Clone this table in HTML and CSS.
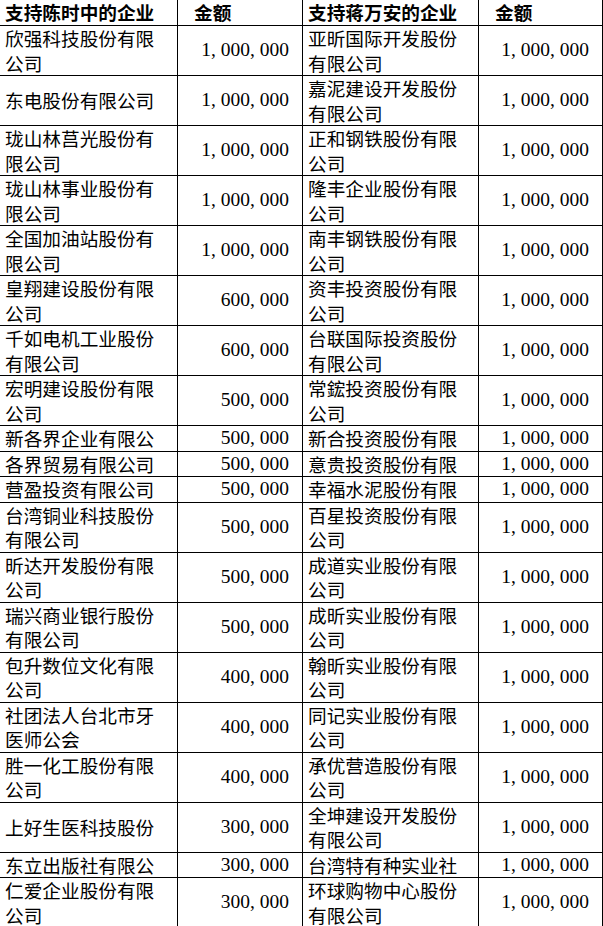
FILE: index.html
```html
<!DOCTYPE html>
<html lang="zh-CN">
<head>
<meta charset="utf-8">
<title>企业捐款</title>
<link rel="stylesheet" href="styles.css">
</head>
<body>
<table class="grid">
  <colgroup>
    <col class="col-name-a">
    <col class="col-amt-a">
    <col class="col-name-b">
    <col class="col-amt-b">
  </colgroup>
  <thead>
    <tr class="head">
      <th class="name">支持陈时中的企业</th>
      <th class="amt-h">金额</th>
      <th class="name">支持蒋万安的企业</th>
      <th class="amt-h">金额</th>
    </tr>
  </thead>
  <tbody>
    <tr class="two"><td class="name">欣强科技股份有限公司</td><td class="amt">1<span class="sep">,</span>000<span class="sep">,</span>000</td><td class="name">亚昕国际开发股份有限公司</td><td class="amt">1<span class="sep">,</span>000<span class="sep">,</span>000</td></tr>
    <tr class="two"><td class="name">东电股份有限公司</td><td class="amt">1<span class="sep">,</span>000<span class="sep">,</span>000</td><td class="name">嘉泥建设开发股份有限公司</td><td class="amt">1<span class="sep">,</span>000<span class="sep">,</span>000</td></tr>
    <tr class="two"><td class="name">珑山林莒光股份有限公司</td><td class="amt">1<span class="sep">,</span>000<span class="sep">,</span>000</td><td class="name">正和钢铁股份有限公司</td><td class="amt">1<span class="sep">,</span>000<span class="sep">,</span>000</td></tr>
    <tr class="two"><td class="name">珑山林事业股份有限公司</td><td class="amt">1<span class="sep">,</span>000<span class="sep">,</span>000</td><td class="name">隆丰企业股份有限公司</td><td class="amt">1<span class="sep">,</span>000<span class="sep">,</span>000</td></tr>
    <tr class="two"><td class="name">全国加油站股份有限公司</td><td class="amt">1<span class="sep">,</span>000<span class="sep">,</span>000</td><td class="name">南丰钢铁股份有限公司</td><td class="amt">1<span class="sep">,</span>000<span class="sep">,</span>000</td></tr>
    <tr class="two"><td class="name">皇翔建设股份有限公司</td><td class="amt">600<span class="sep">,</span>000</td><td class="name">资丰投资股份有限公司</td><td class="amt">1<span class="sep">,</span>000<span class="sep">,</span>000</td></tr>
    <tr class="two"><td class="name">千如电机工业股份有限公司</td><td class="amt">600<span class="sep">,</span>000</td><td class="name">台联国际投资股份有限公司</td><td class="amt">1<span class="sep">,</span>000<span class="sep">,</span>000</td></tr>
    <tr class="two"><td class="name">宏明建设股份有限公司</td><td class="amt">500<span class="sep">,</span>000</td><td class="name">常鋐投资股份有限公司</td><td class="amt">1<span class="sep">,</span>000<span class="sep">,</span>000</td></tr>
    <tr class="one"><td class="name">新各界企业有限公</td><td class="amt">500<span class="sep">,</span>000</td><td class="name">新合投资股份有限</td><td class="amt">1<span class="sep">,</span>000<span class="sep">,</span>000</td></tr>
    <tr class="one"><td class="name">各界贸易有限公司</td><td class="amt">500<span class="sep">,</span>000</td><td class="name">意贵投资股份有限</td><td class="amt">1<span class="sep">,</span>000<span class="sep">,</span>000</td></tr>
    <tr class="one"><td class="name">营盈投资有限公司</td><td class="amt">500<span class="sep">,</span>000</td><td class="name">幸福水泥股份有限</td><td class="amt">1<span class="sep">,</span>000<span class="sep">,</span>000</td></tr>
    <tr class="two"><td class="name">台湾铜业科技股份有限公司</td><td class="amt">500<span class="sep">,</span>000</td><td class="name">百星投资股份有限公司</td><td class="amt">1<span class="sep">,</span>000<span class="sep">,</span>000</td></tr>
    <tr class="two"><td class="name">昕达开发股份有限公司</td><td class="amt">500<span class="sep">,</span>000</td><td class="name">成道实业股份有限公司</td><td class="amt">1<span class="sep">,</span>000<span class="sep">,</span>000</td></tr>
    <tr class="two"><td class="name">瑞兴商业银行股份有限公司</td><td class="amt">500<span class="sep">,</span>000</td><td class="name">成昕实业股份有限公司</td><td class="amt">1<span class="sep">,</span>000<span class="sep">,</span>000</td></tr>
    <tr class="two"><td class="name">包升数位文化有限公司</td><td class="amt">400<span class="sep">,</span>000</td><td class="name">翰昕实业股份有限公司</td><td class="amt">1<span class="sep">,</span>000<span class="sep">,</span>000</td></tr>
    <tr class="two"><td class="name">社团法人台北市牙医师公会</td><td class="amt">400<span class="sep">,</span>000</td><td class="name">同记实业股份有限公司</td><td class="amt">1<span class="sep">,</span>000<span class="sep">,</span>000</td></tr>
    <tr class="two"><td class="name">胜一化工股份有限公司</td><td class="amt">400<span class="sep">,</span>000</td><td class="name">承优营造股份有限公司</td><td class="amt">1<span class="sep">,</span>000<span class="sep">,</span>000</td></tr>
    <tr class="two"><td class="name">上好生医科技股份</td><td class="amt">300<span class="sep">,</span>000</td><td class="name">全坤建设开发股份有限公司</td><td class="amt">1<span class="sep">,</span>000<span class="sep">,</span>000</td></tr>
    <tr class="one"><td class="name">东立出版社有限公</td><td class="amt">300<span class="sep">,</span>000</td><td class="name">台湾特有种实业社</td><td class="amt">1<span class="sep">,</span>000<span class="sep">,</span>000</td></tr>
    <tr class="two"><td class="name">仁爱企业股份有限公司</td><td class="amt">300<span class="sep">,</span>000</td><td class="name">环球购物中心股份有限公司</td><td class="amt">1<span class="sep">,</span>000<span class="sep">,</span>000</td></tr>
  </tbody>
</table>
</body>
</html>
```

FILE: styles.css
```css
html, body {
  margin: 0;
  padding: 0;
  background: #ffffff;
}

body {
  font-family: "Noto Sans CJK SC", "Noto Sans CJK TC", sans-serif;
  color: #000000;
}

.grid {
  border-collapse: separate;
  border-spacing: 0;
  table-layout: fixed;
  width: 603px;
}

.col-name-a { width: 178px; }
.col-amt-a { width: 125px; }
.col-name-b { width: 176px; }
.col-amt-b { width: 124px; }

.grid th,
.grid td {
  box-sizing: border-box;
  border-right: 1px solid #000000;
  border-bottom: 1px solid #000000;
  padding: 0 8px 0 5px;
  font-size: 18.67px;
  line-height: 24.5px;
  vertical-align: middle;
  text-align: left;
}

.grid th {
  font-weight: 700;
}

.grid th.amt-h {
  padding-left: 16px;
}

.grid td.amt {
  text-align: right;
  padding-right: 13px;
  font-family: "Liberation Serif", serif;
  font-size: 19.5px;
  white-space: nowrap;
}

.sep {
  display: inline-block;
  width: 0.5em;
  text-align: left;
}

.head { height: 26px; }
.one { height: 25px; }
.two { height: 50px; }
```
